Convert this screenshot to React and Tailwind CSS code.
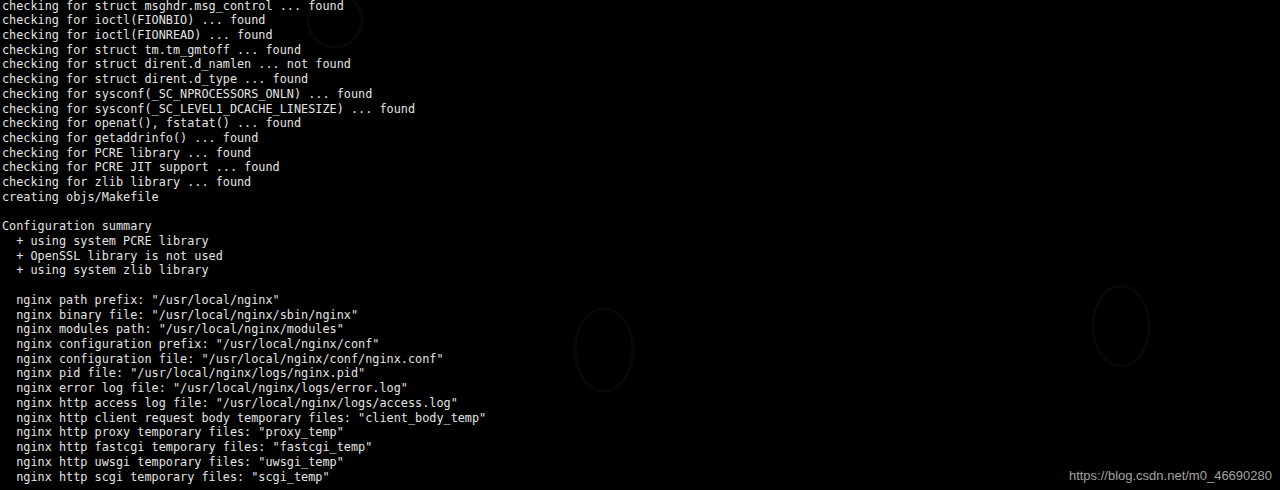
import React from "react";

const lines = [
  "checking for struct msghdr.msg_control ... found",
  "checking for ioctl(FIONBIO) ... found",
  "checking for ioctl(FIONREAD) ... found",
  "checking for struct tm.tm_gmtoff ... found",
  "checking for struct dirent.d_namlen ... not found",
  "checking for struct dirent.d_type ... found",
  "checking for sysconf(_SC_NPROCESSORS_ONLN) ... found",
  "checking for sysconf(_SC_LEVEL1_DCACHE_LINESIZE) ... found",
  "checking for openat(), fstatat() ... found",
  "checking for getaddrinfo() ... found",
  "checking for PCRE library ... found",
  "checking for PCRE JIT support ... found",
  "checking for zlib library ... found",
  "creating objs/Makefile",
  "",
  "Configuration summary",
  "  + using system PCRE library",
  "  + OpenSSL library is not used",
  "  + using system zlib library",
  "",
  '  nginx path prefix: "/usr/local/nginx"',
  '  nginx binary file: "/usr/local/nginx/sbin/nginx"',
  '  nginx modules path: "/usr/local/nginx/modules"',
  '  nginx configuration prefix: "/usr/local/nginx/conf"',
  '  nginx configuration file: "/usr/local/nginx/conf/nginx.conf"',
  '  nginx pid file: "/usr/local/nginx/logs/nginx.pid"',
  '  nginx error log file: "/usr/local/nginx/logs/error.log"',
  '  nginx http access log file: "/usr/local/nginx/logs/access.log"',
  '  nginx http client request body temporary files: "client_body_temp"',
  '  nginx http proxy temporary files: "proxy_temp"',
  '  nginx http fastcgi temporary files: "fastcgi_temp"',
  '  nginx http uwsgi temporary files: "uwsgi_temp"',
  '  nginx http scgi temporary files: "scgi_temp"',
];

// faint watermark rings behind the terminal text
const marks = [
  { left: 572, top: 306, w: 64, h: 88 },
  { left: 1090, top: 283, w: 62, h: 86 },
  { left: 305, top: -10, w: 60, h: 60 },
];

const App = () => {
  return (
    <div className="relative w-[1280px] h-[490px] overflow-hidden bg-black">
      {marks.map((m, i) => (
        <svg
          key={i}
          className="absolute"
          style={{ left: m.left, top: m.top }}
          width={m.w}
          height={m.h}
          viewBox={`0 0 ${m.w} ${m.h}`}
        >
          <ellipse
            cx={m.w / 2}
            cy={m.h / 2}
            rx={m.w / 2 - 3}
            ry={m.h / 2 - 3}
            fill="none"
            stroke="#080808"
            strokeWidth="3"
          />
        </svg>
      ))}

      <pre className="relative -mt-[1.5px] pl-[2px] font-['DejaVu_Sans_Mono',monospace] text-[11.83px] leading-[14.72px] text-[#e4e4e4] whitespace-pre">
        {lines.map((l, i) => (
          <div key={i} className="h-[14.72px]">
            {l}
          </div>
        ))}
      </pre>

      <div className="absolute right-[8px] bottom-[8px] font-['Liberation_Sans',Arial,sans-serif] text-[13px] leading-none text-[#a3a3a3]">
        https://blog.csdn.net/m0_46690280
      </div>
    </div>
  );
};

export default App;
